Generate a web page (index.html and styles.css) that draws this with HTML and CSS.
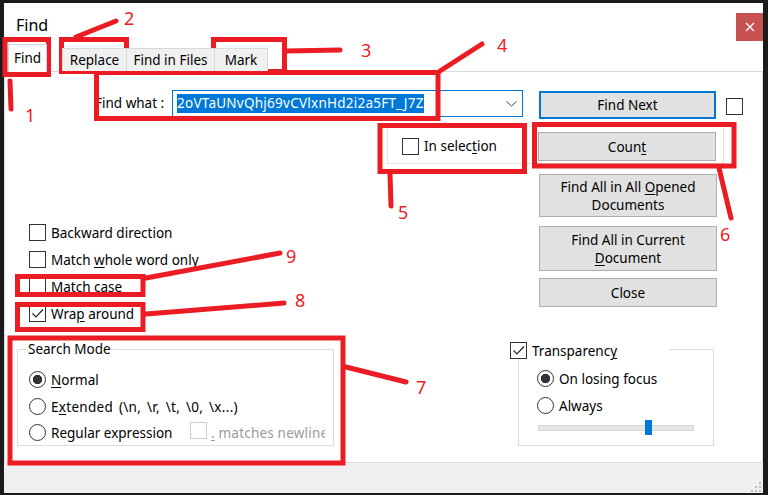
FILE: index.html
```html
<!DOCTYPE html>
<html>
<head>
<meta charset="utf-8">
<link rel="stylesheet" href="styles.css">
</head>
<body>
<div class="screen">
  <div class="dialog">
    <div class="titlebar">
      <span class="title">Find</span>
      <span class="close"><svg width="10" height="10" viewBox="0 0 10 10"><path d="M1 1L9 9M9 1L1 9" stroke="#fff" stroke-width="1.3"/></svg></span>
    </div>
    <div class="tabs">
      <div class="tab active">Find</div>
      <div class="tab t-replace">Replace</div>
      <div class="tab t-files">Find in Files</div>
      <div class="tab t-mark">Mark</div>
    </div>
    <div class="panel">
      <div class="findrow">
        <span class="fw-label">Find what :</span>
        <div class="combo">
          <span class="sel">2oVTaUNvQhj69vCVlxnHd2i2a5FT_J7Z</span>
          <svg class="chev" width="11" height="6" viewBox="0 0 11 6"><path d="M0.5 0.5L5.5 5L10.5 0.5" fill="none" stroke="#444" stroke-width="1"/></svg>
        </div>
        <button class="btn default">Find Next</button>
        <span class="cb cb-top"></span>
      </div>
      <div class="selbox">
        <label class="check sel-check"><span class="cb"></span><span>In selec<u>t</u>ion</span></label>
        <button class="btn count">Coun<u>t</u></button>
      </div>
      <div class="mainrow">
        <div class="options">
          <label class="check opt"><span class="cb"></span><span>Backward direction</span></label>
          <label class="check opt"><span class="cb"></span><span>Match <u>w</u>hole word only</span></label>
          <label class="check opt"><span class="cb"></span><span>Match case</span></label>
          <label class="check opt"><span class="cb checked"><svg width="15" height="15" viewBox="0 0 15 15"><path d="M2.5 7.5L6 11L13 3.5" fill="none" stroke="#222" stroke-width="1.2"/></svg></span><span>Wra<u>p</u> around</span></label>
        </div>
        <div class="buttons">
          <button class="btn b-opened">Find All in All <u>O</u>pened<br>Documents</button>
          <button class="btn b-current">Find All in Current<br><u>D</u>ocument</button>
          <button class="btn b-close">Close</button>
        </div>
      </div>
      <div class="groups">
        <fieldset class="group search">
          <legend class="search-legend">Search Mode</legend>
          <div class="radios">
            <div class="rrow r1"><span class="radio on"></span><span><u>N</u>ormal</span></div>
            <div class="rrow r2"><span class="radio"></span><span class="ext">E<u>x</u>tended (\n, \r, \t, \0, \x...)</span></div>
            <div class="rrow r3"><span class="radio"></span><span class="rx-label">Regular expression</span><span class="cb dis"></span><span class="dis-text"><u>.</u> matches newline</span></div>
          </div>
        </fieldset>
        <fieldset class="group trans">
          <legend class="trans-legend"><span class="cb checked"><svg width="15" height="15" viewBox="0 0 15 15"><path d="M2.5 7.5L6 11L13 3.5" fill="none" stroke="#222" stroke-width="1.2"/></svg></span><span class="tl-text">Transparenc<u>y</u></span></legend>
          <div class="radios t-radios">
            <div class="rrow"><span class="radio on"></span><span>On losing focus</span></div>
            <div class="rrow"><span class="radio"></span><span>Always</span></div>
          </div>
          <div class="slider"><span class="track"></span><span class="thumb"></span></div>
        </fieldset>
      </div>
    </div>
    <div class="footer">
      <svg class="grip" width="12" height="12" viewBox="0 0 12 12" fill="#bdbdbd">
        <rect x="9" y="1" width="2" height="2"/>
        <rect x="5" y="5" width="2" height="2"/><rect x="9" y="5" width="2" height="2"/>
        <rect x="1" y="9" width="2" height="2"/><rect x="5" y="9" width="2" height="2"/><rect x="9" y="9" width="2" height="2"/>
      </svg>
    </div>
  </div>
  <svg class="annot" width="768" height="495" viewBox="0 0 768 495">
    <g fill="none" stroke="#ec1c24" stroke-width="5" stroke-linecap="round">
      <rect x="5" y="39.5" width="43.5" height="35"/>
      <line x1="10" y1="81" x2="11" y2="109"/>
      <rect x="61.5" y="39.5" width="65" height="32"/>
      <line x1="76" y1="37" x2="116" y2="21"/>
      <rect x="213.5" y="39.5" width="71" height="32"/>
      <line x1="286" y1="51" x2="340" y2="50"/>
      <rect x="96.5" y="72.5" width="341.5" height="46"/>
      <line x1="440" y1="71" x2="482" y2="44"/>
      <rect x="380" y="125.5" width="144.5" height="46"/>
      <line x1="390" y1="174" x2="391" y2="206"/>
      <rect x="534.5" y="124.5" width="199.5" height="41.5"/>
      <line x1="719" y1="168" x2="731" y2="218"/>
      <rect x="10" y="338" width="333" height="125"/>
      <line x1="346" y1="367" x2="406" y2="382"/>
      <rect x="17.5" y="304.5" width="125.5" height="25"/>
      <line x1="146" y1="314" x2="284" y2="303"/>
      <rect x="17.5" y="276.5" width="125.5" height="18"/>
      <line x1="146" y1="278" x2="280" y2="253"/>
    </g>
    <g class="nums" fill="#ec1c24">
      <text x="25" y="122">1</text>
      <text x="124" y="25">2</text>
      <text x="361" y="57">3</text>
      <text x="497" y="52">4</text>
      <text x="398" y="219">5</text>
      <text x="720" y="241">6</text>
      <text x="416" y="394">7</text>
      <text x="295" y="307">8</text>
      <text x="286" y="263">9</text>
    </g>
  </svg>
</div>
</body>
</html>
```

FILE: styles.css
```css
* { box-sizing: border-box; }
body { margin: 0; font-family: "Noto Sans", sans-serif; font-size: 13.5px; color: #000; }
u { text-decoration: underline; text-underline-offset: 2px; }

.screen { position: relative; width: 768px; height: 495px; background: #1b1b1b; padding: 3px 5px 2px 4px; overflow: hidden; }
.dialog { background: #fff; height: 490px; display: flex; flex-direction: column; }

.titlebar { height: 41px; display: flex; align-items: flex-start; flex: none; }
.title { font-size: 16px; line-height: 20px; margin: 12px 0 0 12px; }
.close { margin-left: auto; margin-top: 10px; width: 27px; height: 28px; background: #c75050; display: flex; align-items: center; justify-content: center; }

.tabs { height: 27px; display: flex; align-items: flex-end; padding-left: 4px; position: relative; z-index: 1; flex: none; }
.tab { height: 23px; border: 1px solid #d9d9d9; border-bottom: none; background: #f0f0f0; line-height: 22px; text-align: center; white-space: nowrap; }
.tab.active { width: 39px; height: 28px; margin-bottom: -1px; background: #fff; line-height: 27px; }
.t-replace { width: 65px; margin-left: 15px; }
.t-files { width: 88px; border-left: none; }
.t-mark { width: 53px; border-left: none; }

.panel { height: 392px; border: 1px solid #dadada; padding: 18px 18px 0 12px; flex: none; }

.findrow { display: flex; align-items: flex-start; height: 29px; }
.fw-label { width: 77px; margin-left: 78px; line-height: 27px; white-space: nowrap; }
.combo { width: 351px; height: 27px; border: 1px solid #0078d7; display: flex; align-items: center; padding-left: 4px; }
.sel { background: #0078d7; color: #fff; line-height: 19px; white-space: nowrap; letter-spacing: 0.25px; }
.chev { margin-left: auto; margin-right: 5px; }

.btn { font: inherit; color: #000; background: #e1e1e1; border: 1px solid #adadad; width: 178px; padding: 0; line-height: 18px; text-align: center; }
.btn.default { width: 177px; height: 28px; margin: 1px 0 0 16px; border: 2px solid #0078d7; }
.cb-top { margin: 8px 0 0 10px; }

.cb { width: 17px; height: 17px; border: 1px solid #333; background: #fff; flex: none; display: inline-flex; align-items: center; justify-content: center; }
.check { display: flex; align-items: center; white-space: nowrap; }
.check .cb { margin-right: 5px; }

.selbox { margin: 7px 0 0 370px; width: 337px; height: 38px; border: 1px solid #e3e3e3; display: flex; align-items: flex-start; padding: 5px 7px 0 14px; }
.sel-check { height: 19px; line-height: 19px; margin-top: 5px; }
.count { margin-left: auto; height: 29px; }

.mainrow { display: flex; justify-content: space-between; align-items: flex-start; }
.options { margin: 55px 0 0 12px; }
.opt { height: 27px; }
.buttons { margin: 10px 27px 0 0; width: 178px; display: flex; flex-direction: column; }
.b-opened { height: 43px; }
.b-current { height: 45px; margin-top: 9px; }
.b-close { height: 29px; margin-top: 7px; }

.groups { display: flex; align-items: flex-start; margin-top: 13px; }
.group { margin: 0; border: 1px solid #dcdcdc; min-width: 0; }
.search { width: 317px; padding: 0 0 0 11px; }
.search-legend { padding: 0 2px; margin-left: -3px; line-height: 18px; }
.radios { margin-top: 8px; }
.rrow { display: flex; align-items: center; height: 27px; white-space: nowrap; }
.rrow.r3 { height: 25px; }
.radio { width: 17px; height: 17px; border: 1px solid #333; border-radius: 50%; margin-right: 5px; flex: none; background: #fff; }
.radio.on { background: radial-gradient(circle, #333 0 4.4px, #fff 5px); }
.ext { word-spacing: 2px; letter-spacing: 0.3px; }
.rx-label { width: 139px; }
.cb.dis { border-color: #cccccc; align-self: flex-start; margin: 2px 4px 0 0; }
.dis-text { width: 114px; overflow: hidden; color: #9a9a9a; letter-spacing: 0.2px; }

.trans { width: 196px; margin-left: 184px; padding: 0 0 0 18px; }
.trans-legend { width: 159px; height: 18px; margin-left: -27px; padding: 0; background: #fff; display: flex; align-items: flex-start; }
.trans-legend .cb { margin: 2px 5px 0 0; }
.tl-text { line-height: 18px; margin-top: 2px; white-space: nowrap; }
.t-radios { margin-top: 7px; }
.slider { position: relative; height: 16px; margin: 1px 0 9px 1px; width: 156px; display: flex; align-items: center; }
.track { display: block; width: 156px; height: 6px; background: #e7e7e7; border: 1px solid #d6d6d6; }
.thumb { position: absolute; left: 107px; top: 0; width: 7px; height: 15px; background: #0078d7; }

.footer { height: 30px; background: #f0f0f0; display: flex; justify-content: flex-end; align-items: flex-end; padding: 0 1px 0 0; flex: none; }
.grip { display: block; }

.annot { position: absolute; left: 0; top: 0; pointer-events: none; }
.nums text { font-family: "Noto Sans", sans-serif; font-size: 18px; }
```
